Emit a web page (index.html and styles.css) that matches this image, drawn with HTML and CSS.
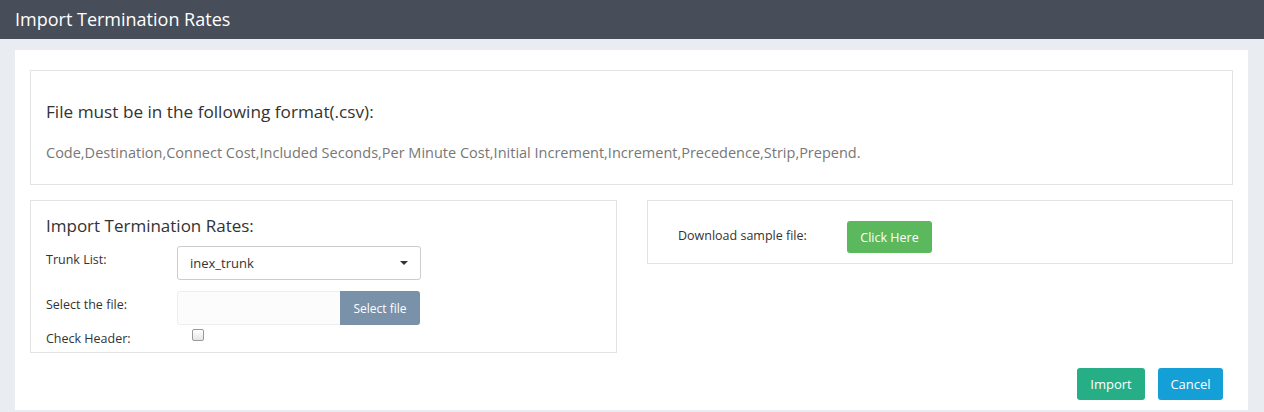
FILE: index.html
```html
<!DOCTYPE html>
<html>
<head>
<meta charset="utf-8">
<link rel="stylesheet" href="styles.css">
</head>
<body>
<div class="topbar">Import Termination Rates</div>
<div class="page">
  <div class="panel">
    <div class="box format-box">
      <h3 class="format-title">File must be in the following format(.csv):</h3>
      <p class="format-text">Code,Destination,Connect Cost,Included Seconds,Per Minute Cost,Initial Increment,Increment,Precedence,Strip,Prepend.</p>
    </div>
    <div class="row">
      <div class="box import-box">
        <h4 class="import-title">Import Termination Rates:</h4>
        <div class="field field-trunk">
          <label class="label">Trunk List:</label>
          <div class="select">
            <span>inex_trunk</span>
            <span class="caret"></span>
          </div>
        </div>
        <div class="field field-file">
          <label class="label">Select the file:</label>
          <div class="file">
            <div class="file-input"></div>
            <div class="file-btn">Select file</div>
          </div>
        </div>
        <div class="field field-check">
          <label class="label">Check Header:</label>
          <span class="checkbox"></span>
        </div>
      </div>
      <div class="box sample-box">
        <span class="sample-label">Download sample file:</span>
        <button class="btn btn-green">Click Here</button>
      </div>
    </div>
    <div class="actions">
      <button class="btn btn-import">Import</button>
      <button class="btn btn-cancel">Cancel</button>
    </div>
  </div>
</div>
</body>
</html>
```

FILE: styles.css
```css
* { box-sizing: border-box; }
html, body { margin: 0; padding: 0; }
body {
  font-family: "Open Sans", "Noto Sans", sans-serif;
  background: #e9edf2;
  color: #333;
  width: 1264px;
  height: 412px;
  overflow: hidden;
}
.topbar {
  height: 39px;
  background: #474d59;
  color: #fff;
  font-size: 18px;
  line-height: 39px;
  padding-left: 15px;
}
.page {
  padding: 11px 16px 0 15px;
}
.panel {
  background: #fff;
  padding: 20px 15px 10px 15px;
  height: 360px;
}
.box {
  border: 1px solid #e3e3e3;
  background: #fff;
}
.format-box {
  height: 115px;
  padding: 30px 16px 0 15px;
}
.format-title {
  margin: 0;
  font-size: 17.2px;
  font-weight: 400;
  line-height: 22px;
  color: #333;
}
.format-text {
  margin: 20px 0 0 0;
  font-size: 14.5px;
  line-height: 20px;
  color: #777;
}
.row {
  display: flex;
  gap: 30px;
  margin-top: 15px;
  align-items: flex-start;
}
.import-box {
  width: 587px;
  height: 153px;
  padding: 14px 15px 0 15px;
}
.import-title {
  margin: 0;
  font-size: 17px;
  font-weight: 400;
  line-height: 22px;
  color: #333;
}
.field {
  display: flex;
  align-items: flex-start;
}
.label {
  width: 131px;
  font-size: 12.5px;
  line-height: 17px;
  color: #333;
}
.field-trunk { margin-top: 9px; }
.field-trunk .label { padding-top: 5px; }
.select {
  width: 244px;
  height: 34px;
  border: 1px solid #ccc;
  border-radius: 3px;
  display: flex;
  align-items: center;
  justify-content: space-between;
  padding: 0 12px;
  font-size: 13px;
  color: #333;
}
.caret {
  width: 0; height: 0;
  border-left: 4px solid transparent;
  border-right: 4px solid transparent;
  border-top: 4px solid #333;
}
.field-file { margin-top: 11px; }
.field-file .label { padding-top: 5px; }
.file {
  display: flex;
  width: 243px;
  height: 34px;
}
.file-input {
  flex: 1;
  border: 1px solid #eee;
  border-right: none;
  background: #fcfcfc;
  border-radius: 3px 0 0 3px;
}
.file-btn {
  width: 80px;
  background: #7a91aa;
  color: #fff;
  font-size: 12px;
  display: flex;
  align-items: center;
  justify-content: center;
  border-radius: 0 3px 3px 0;
}
.field-check { margin-top: 4px; }
.field-check .label { padding-top: 1px; }
.checkbox {
  margin-left: 15px;
  width: 12px;
  height: 12px;
  border: 1px solid #999;
  border-radius: 2px;
  background: linear-gradient(#fff, #e6e6e6);
}
.sample-box {
  flex: 1;
  height: 64px;
  display: flex;
  align-items: flex-start;
  padding: 20px 30px 0 30px;
}
.sample-label {
  font-size: 12.5px;
  line-height: 17px;
  color: #333;
  width: 169px;
  margin-top: 6px;
}
.btn {
  border: none;
  color: #fff;
  font-family: "Open Sans", "Noto Sans", sans-serif;
  font-size: 12.5px;
  border-radius: 3px;
  height: 32px;
  padding: 0;
  cursor: pointer;
}
.btn-green { background: #5cb85c; width: 85px; }
.actions {
  display: flex;
  justify-content: flex-end;
  gap: 13px;
  margin-top: 15px;
  padding-right: 10px;
}
.btn-import { background: #26ae87; width: 68px; font-size: 13px; }
.btn-cancel { background: #14a0d6; width: 65px; font-size: 13px; }
```
